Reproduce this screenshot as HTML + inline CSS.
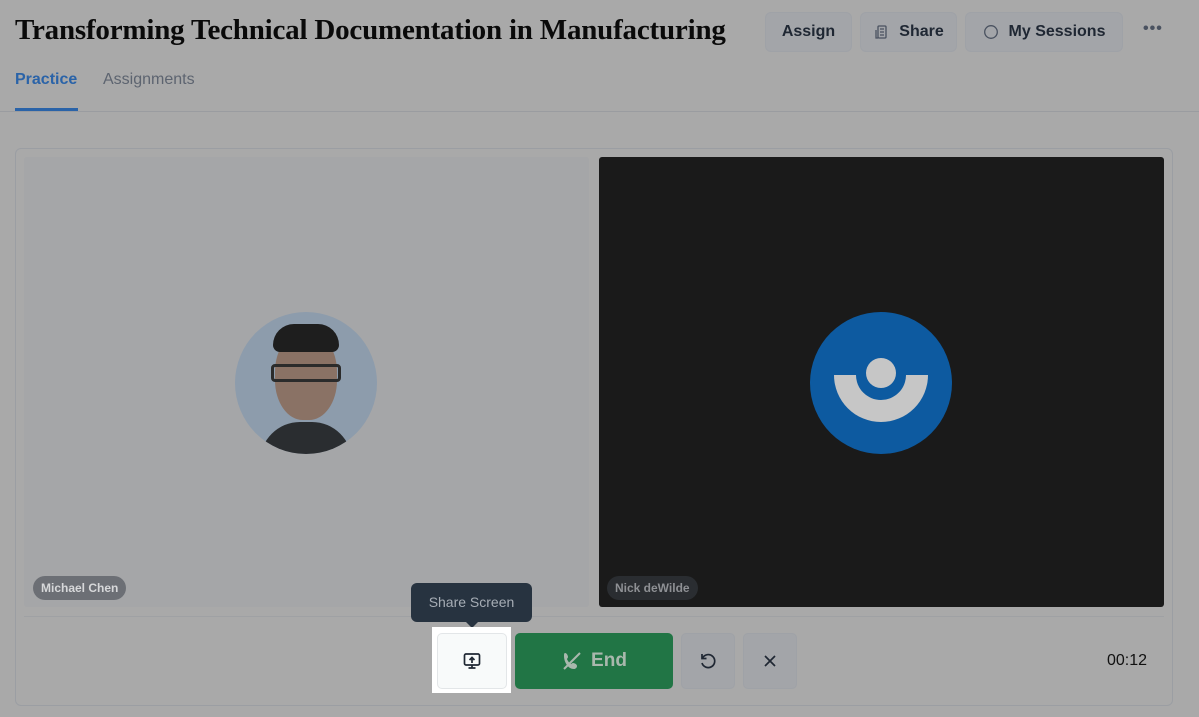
<!DOCTYPE html>
<html><head><style>
body{margin:0;width:1199px;height:717px;background:#a9a9a9;font-family:"Liberation Sans",sans-serif;position:relative;overflow:hidden}
.a{position:absolute}
.btn{position:absolute;top:12px;height:40px;background:#a3a5a9;border:1px solid #9fa2a7;border-radius:6px;box-sizing:border-box;font-weight:bold;font-size:16px;color:#1f2733;display:flex;align-items:center;justify-content:center}
</style></head><body>
<div class="a" style="left:15px;top:14px;font-family:'Liberation Serif',serif;font-weight:bold;font-size:29px;color:#0a0a0a;letter-spacing:-0.2px">Transforming Technical Documentation in Manufacturing</div>
<div class="btn" style="left:765px;width:87px">Assign</div>
<div class="btn" style="left:860px;width:97px"><svg width="16" height="16" viewBox="0 0 16 16" style="margin-right:10px" fill="none" stroke="#4a5260" stroke-width="1.3"><rect x="5" y="2" width="8" height="12" rx="1"/><path d="M3 6v8h2M7 5h4M7 8h4M7 11h4"/></svg>Share</div>
<div class="btn" style="left:965px;width:158px"><svg width="16" height="16" style="margin-right:10px"><circle cx="8" cy="8" r="6.3" fill="none" stroke="#4a5260" stroke-width="1.3"/></svg>My Sessions</div>
<div class="a" style="left:1143px;top:20px;font-size:16px;font-weight:bold;color:#4a5260;letter-spacing:1px">•••</div>
<div class="a" style="left:15px;top:71px;font-size:16px;font-weight:bold;color:#2a63a8">Practice</div>
<div class="a" style="left:15px;top:108px;width:63px;height:3px;background:#2a63a8"></div>
<div class="a" style="left:103px;top:71px;font-size:16px;color:#5d6470">Assignments</div>
<div class="a" style="left:0;top:111px;width:1199px;height:1px;background:#9a9ca0"></div>
<div class="a" style="left:15px;top:148px;width:1156px;height:556px;border:1px solid #9b9ea3;border-radius:6px"></div>
<div class="a" style="left:24px;top:157px;width:565px;height:450px;background:#a5a6a8;border-radius:3px"></div>
<div class="a" style="left:599px;top:157px;width:565px;height:450px;background:#1a1a1a;border-radius:3px"></div>
<div class="a" style="left:24px;top:616px;width:1140px;height:1px;background:#9fa1a4"></div>
<div class="a" style="left:235px;top:312px;width:142px;height:142px;border-radius:50%;background:#8d9cac;overflow:hidden">
<div class="a" style="left:25px;top:110px;width:92px;height:40px;background:#2a2d30;border-radius:40px 40px 0 0"></div>
<div class="a" style="left:40px;top:20px;width:62px;height:88px;background:#8a7265;border-radius:45%"></div>
<div class="a" style="left:38px;top:12px;width:66px;height:28px;background:#1e1e1e;border-radius:30px 30px 10px 10px"></div>
<div class="a" style="left:36px;top:52px;width:70px;height:18px;border:3px solid #2b2b2b;box-sizing:border-box;border-radius:4px"></div>
</div>
<div class="a" style="left:810px;top:312px;width:142px;height:142px;border-radius:50%;background:#0d5aa0">
<div class="a" style="left:24px;top:63px;width:94px;height:47px;background:#c6c6c6;border-radius:0 0 47px 47px"></div>
<div class="a" style="left:46px;top:63px;width:50px;height:25px;background:#0d5aa0;border-radius:0 0 25px 25px"></div>
<div class="a" style="left:56px;top:46px;width:30px;height:30px;border-radius:50%;background:#c6c6c6"></div>
</div>
<div class="a" style="left:33px;top:576px;height:24px;padding:0 8px;background:#6c6f75;border-radius:12px;color:#d7d8da;font-size:12px;font-weight:bold;line-height:24px">Michael Chen</div>
<div class="a" style="left:607px;top:576px;height:24px;padding:0 8px;background:#2a2d31;border-radius:12px;color:#8e9094;font-size:12px;font-weight:bold;line-height:24px">Nick deWilde</div>
<div class="a" style="left:411px;top:583px;width:121px;height:39px;background:#273340;border-radius:6px;color:#a6adb5;font-size:14px;text-align:center;line-height:39px">Share Screen</div>
<div class="a" style="left:466px;top:622px;width:0;height:0;border-left:6px solid transparent;border-right:6px solid transparent;border-top:6px solid #273340"></div>
<div class="a" style="left:432px;top:627px;width:79px;height:66px;background:#fff"></div>
<div class="a" style="left:437px;top:633px;width:70px;height:56px;background:#f8fafa;border:1px solid #e3e6e8;border-radius:5px;box-sizing:border-box;display:flex;align-items:center;justify-content:center">
<svg width="20" height="20" viewBox="0 0 20 20" fill="none" stroke="#1f2733" stroke-width="1.7"><rect x="2.5" y="3" width="15" height="11" rx="1.5"/><path d="M10 12V6.5M7.5 9l2.5-2.5L12.5 9M10 14v3M6.5 17h7"/></svg></div>
<div class="a" style="left:515px;top:633px;width:158px;height:56px;background:#217545;border-radius:5px;display:flex;align-items:center;justify-content:center;color:#a9b8ad;font-size:19px;font-weight:bold">
<svg width="22" height="22" viewBox="0 0 22 22" style="margin-right:8px" fill="#a9b8ad"><path d="M4 3c2 0 3 3 3 4s-1 1.5-1 2 2 4 4 5c.5 0 1-1 2-1s4 1 4 3-2 3-3 3C7 19 3 12 3 6c0-1 0-3 1-3z"/><path d="M3 19L19 3" stroke="#a9b8ad" stroke-width="2"/></svg>End</div>
<div class="a" style="left:681px;top:633px;width:54px;height:56px;background:#a3a5a9;border:1px solid #9fa2a7;border-radius:5px;box-sizing:border-box;display:flex;align-items:center;justify-content:center">
<svg width="20" height="20" viewBox="0 0 20 20" fill="none" stroke="#1f2733" stroke-width="1.7"><path d="M4.5 7A6.5 6.5 0 1 1 4 12"/><path d="M4 3v4.5h4.5"/></svg></div>
<div class="a" style="left:743px;top:633px;width:54px;height:56px;background:#a3a5a9;border:1px solid #9fa2a7;border-radius:5px;box-sizing:border-box;display:flex;align-items:center;justify-content:center">
<svg width="16" height="16" viewBox="0 0 16 16" stroke="#1f2733" stroke-width="1.7"><path d="M3 3l10 10M13 3L3 13"/></svg></div>
<div class="a" style="left:1107px;top:652px;font-size:16px;color:#111">00:12</div>
</body></html>
